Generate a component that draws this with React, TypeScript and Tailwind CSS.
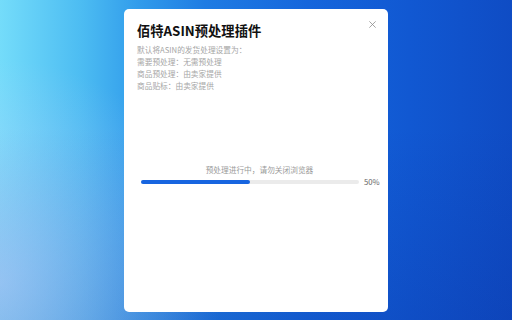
import React from "react";

export default function App() {
  return (
    <div
      className="relative w-[512px] h-[320px] overflow-hidden flex justify-center pt-[9px] bg-[radial-gradient(circle_at_0%_88%,rgba(190,200,250,0.55),transparent_38%),linear-gradient(to_bottom,transparent_40%,rgba(8,40,150,0.22)_100%),linear-gradient(to_right,#74dcfa_0%,#4cbcf2_16%,#319ceb_27%,#1f7ce3_40%,#1566dc_60%,#1158d2_80%,#0f4cc4_100%)]"
      style={{ fontFamily: '"Noto Sans CJK SC", "Noto Sans", sans-serif' }}
    >
      <div className="relative w-[264px] h-[303px] bg-white rounded-[5px] flex flex-col pt-[12px]">
        <button className="absolute top-[12px] right-[12px] w-[7px] h-[7px] text-[#8a8a8a]">
          <svg viewBox="0 0 10 10" className="w-[7px] h-[7px]" fill="none" stroke="currentColor" strokeWidth="1.1">
            <path d="M0.5 0.5 L9.5 9.5 M9.5 0.5 L0.5 9.5" />
          </svg>
        </button>
        <h1 className="pl-[13px] text-[13.3px] leading-[20px] font-bold text-[#111]">佰特ASIN预处理插件</h1>
        <div className="pl-[13px] mt-[3px] text-[7.7px] leading-[12px] text-[#a6a6a6]">
          <p>默认将ASIN的发货处理设置为：</p>
          <p>需要预处理：无需预处理</p>
          <p>商品预处理：由卖家提供</p>
          <p>商品贴标：由卖家提供</p>
        </div>
        <p className="mt-[71.5px] text-center text-[7.7px] leading-[12px] text-[#9a9a9a] pl-[7px]">
          预处理进行中，请勿关闭浏览器
        </p>
        <div className="flex items-center pl-[17px] h-[12px]">
          <div className="w-[218px] h-[4px] rounded-full bg-[#ebebeb]">
            <div className="h-full rounded-full bg-[#1765e0]" style={{ width: "50%" }} />
          </div>
          <span className="ml-[5px] text-[7.7px] leading-[12px] text-[#666]">50%</span>
        </div>
      </div>
    </div>
  );
}
